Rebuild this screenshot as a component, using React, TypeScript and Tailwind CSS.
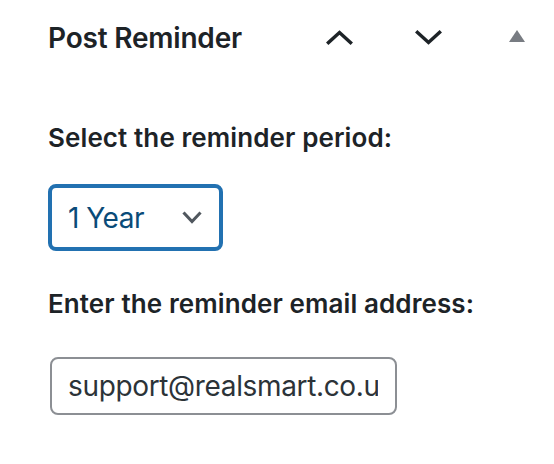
import { useState } from "react";

function ChevronUp() {
  return (
    <svg width="27" height="15" viewBox="0 0 27 15" fill="none">
      <path
        d="M2.5 12.5 L13.5 2.5 L24.5 12.5"
        stroke="#1d2327"
        strokeWidth="3.5"
        strokeLinecap="square"
      />
    </svg>
  );
}

function ChevronDown({ color = "#1d2327", w = 27, h = 15, sw = 3.5 }) {
  return (
    <svg width={w} height={h} viewBox={`0 0 ${w} ${h}`} fill="none">
      <path
        d={`M2.5 2.5 L${w / 2} ${h - 2.5} L${w - 2.5} 2.5`}
        stroke={color}
        strokeWidth={sw}
        strokeLinecap="square"
      />
    </svg>
  );
}

function Triangle() {
  return (
    <svg width="16" height="12" viewBox="0 0 16 12">
      <polygon points="0,12 8,0 16,12" fill="#787c82" />
    </svg>
  );
}

export default function App() {
  const [email] = useState("support@realsmart.co.uk");

  return (
    <div className="w-[554px] h-[464px] bg-white font-['Inter',sans-serif] text-[#1d2327] overflow-hidden">
      {/* header */}
      <div className="flex items-center h-[75px] pl-[48px] pr-[29px]">
        <h2 className="flex-1 text-[28px] font-semibold leading-none tracking-[-0.2px]">
          Post Reminder
        </h2>
        <button className="flex items-center">
          <ChevronUp />
        </button>
        <button className="flex items-center ml-[62px]">
          <ChevronDown />
        </button>
        <button className="flex items-center ml-[67px] -mt-[3px]">
          <Triangle />
        </button>
      </div>

      {/* body */}
      <div className="pl-[48px]">
        <p className="mt-[50px] text-[26px] font-semibold leading-none tracking-[0.1px]">
          Select the reminder period:
        </p>
        <div className="mt-[33px] flex items-center w-[175px] h-[67px] border-4 border-[#2271b1] rounded-[8px] pl-[16px] pr-[17px]">
          <span className="text-[28px] leading-none tracking-[-0.5px] text-[#0a4b78]">
            1 Year
          </span>
          <span className="ml-auto flex">
            <ChevronDown color="#50575e" w={20} h={13} sw={3} />
          </span>
        </div>

        <p className="mt-[40px] text-[26px] font-semibold leading-none tracking-[0.1px]">
          Enter the reminder email address:
        </p>
        <input
          readOnly
          value={email}
          className="mt-[40px] ml-[2px] block w-[347px] h-[58px] border-2 border-[#8c8f94] rounded-[8px] pl-[16px] pr-[17px] text-[28px] tracking-[-0.35px] text-[#2c3338] outline-none"
        />
      </div>
    </div>
  );
}
